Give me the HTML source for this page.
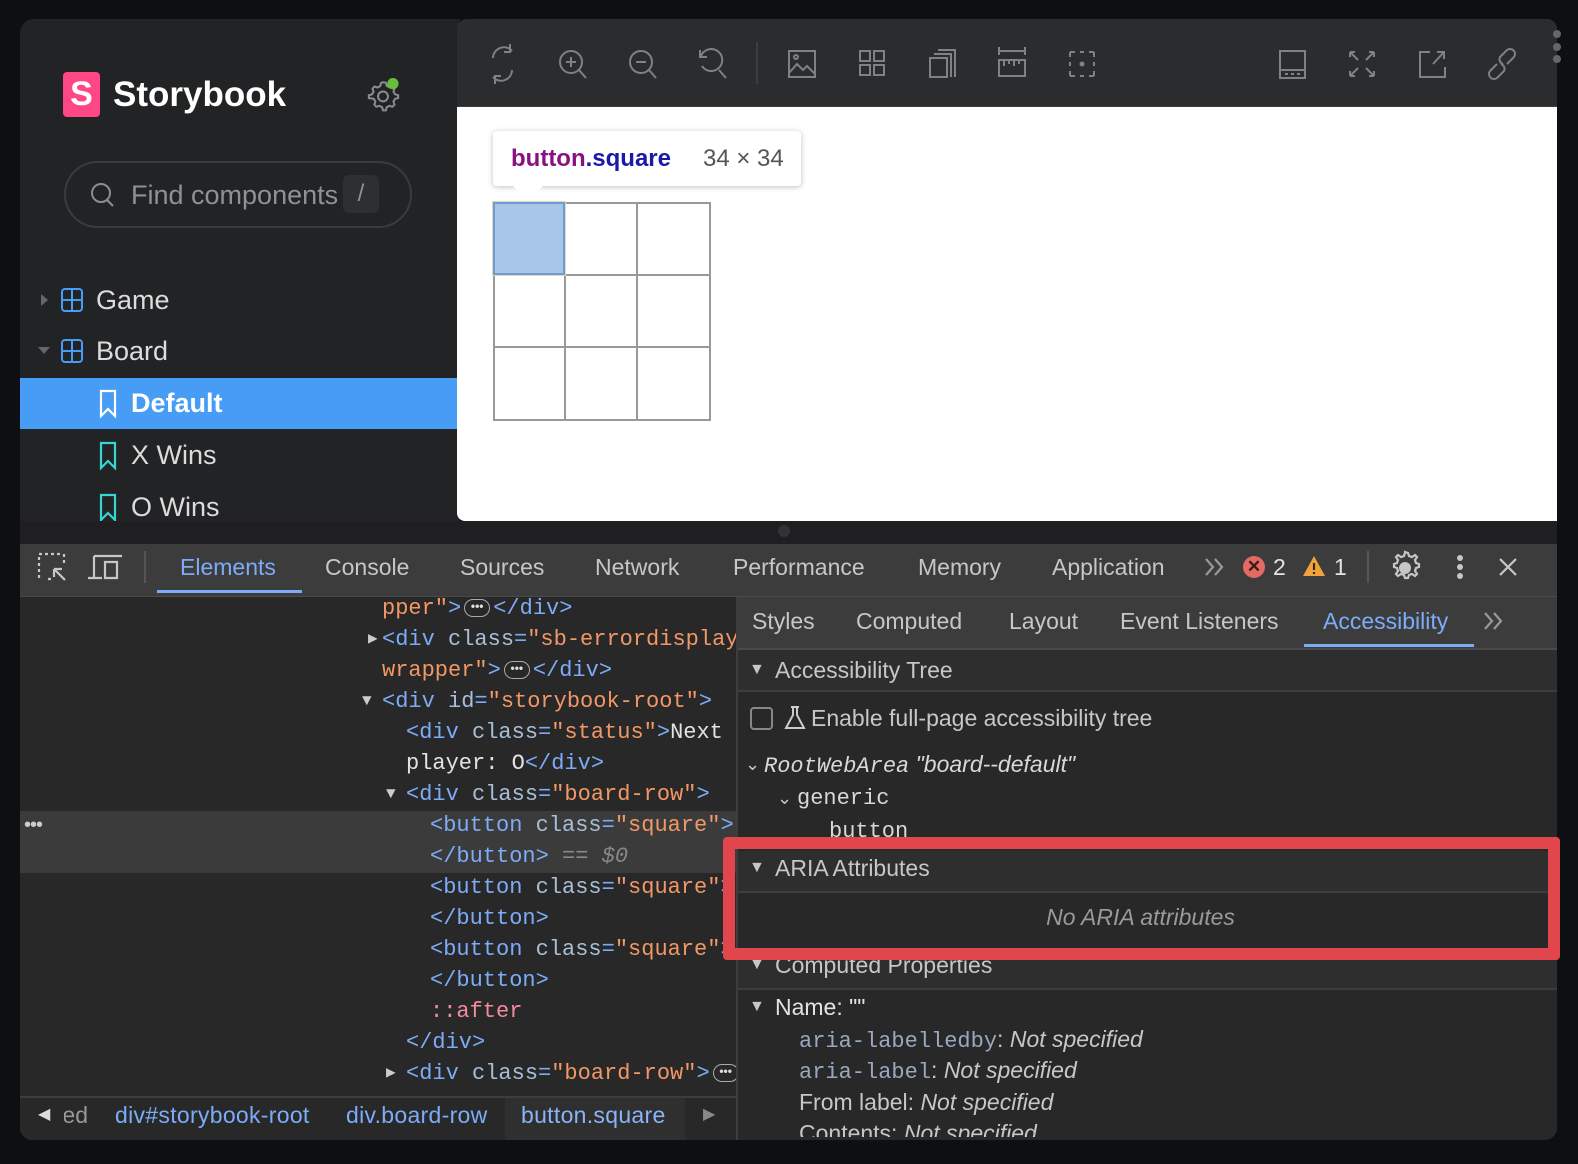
<!DOCTYPE html>
<html><head><meta charset="utf-8">
<style>
*{box-sizing:border-box;margin:0;padding:0}
body{width:1578px;height:1164px;background:#0e0f12;position:relative;overflow:hidden;font-family:"Liberation Sans",sans-serif}
.a{position:absolute;white-space:nowrap}
.m{font-family:"Liberation Mono",monospace;font-size:22px;line-height:31px}
.tg{color:#7cacf8}.at{color:#a8bfd8}.av{color:#f29766}.tx{color:#e3e3e3}
.badge{display:inline-block;width:26px;height:18px;border:1.5px solid #aaa;border-radius:9px;vertical-align:middle;font-size:12px;line-height:13px;text-align:center;color:#ddd;margin:0 3px;font-family:"Liberation Sans",sans-serif;font-weight:bold}
.dt{font-size:23px;color:#c7c7c7;line-height:30px}
svg{position:absolute;overflow:visible}
</style></head><body>
<!-- sidebar -->
<div class="a" style="left:20px;top:19px;width:440px;height:502px;background:#222325;border-top-left-radius:14px"></div>
<div class="a" style="left:63px;top:72px;width:37px;height:45px;background:#ff4785;border-radius:4px;color:#fff;font-weight:bold;font-size:34px;text-align:center;line-height:45px">S</div>
<div class="a" style="left:113px;top:72px;font-size:35px;font-weight:bold;color:#fff;line-height:45px">Storybook</div>
<svg style="left:366px;top:78px" width="34" height="34" viewBox="0 0 24 24"><path d="M12 3l2 .3.6 2.2 1.9 1.1 2.2-.7 1.4 1.5-.7 2.2 1.1 1.9 2.2.6v2l-2.2.6-1.1 1.9.7 2.2-1.4 1.5-2.2-.7-1.9 1.1-.6 2.2h-2l-.6-2.2-1.9-1.1-2.2.7-1.4-1.5.7-2.2-1.1-1.9L2 14.2v-2l2.2-.6 1.1-1.9-.7-2.2 1.4-1.5 2.2.7 1.9-1.1.6-2.2z" fill="none" stroke="#8b8d90" stroke-width="1.4"/><circle cx="12" cy="13" r="3.5" fill="none" stroke="#8b8d90" stroke-width="1.4"/><circle cx="19" cy="4" r="4" fill="#66bf3c"/></svg>
<div class="a" style="left:64px;top:161px;width:348px;height:67px;border:2px solid #3a3b3e;border-radius:34px"></div>
<svg style="left:90px;top:182px" width="26" height="26"><circle cx="11" cy="11" r="9" fill="none" stroke="#8b8d90" stroke-width="2"/><path d="M17 18l6 6" stroke="#8b8d90" stroke-width="2"/></svg>
<div class="a" style="left:131px;top:178px;width:212px;overflow:hidden;font-size:27px;color:#8f9194;line-height:34px">Find components</div>
<div class="a" style="left:343px;top:175px;width:36px;height:38px;background:#2e2f31;border-radius:6px;color:#8f9194;font-size:24px;text-align:center;line-height:38px">/</div>
<svg style="left:40px;top:293px" width="10" height="14"><path d="M1 1l7 6-7 6z" fill="#666"/></svg>
<svg style="left:61px;top:288px" width="22" height="24"><rect x="1" y="1" width="20" height="22" rx="3" fill="none" stroke="#479cf5" stroke-width="2"/><path d="M11 1v22M1 12h20" stroke="#479cf5" stroke-width="2"/></svg>
<div class="a" style="left:96px;top:283px;font-size:27px;color:#dcdcdc;line-height:34px">Game</div>
<svg style="left:37px;top:346px" width="14" height="10"><path d="M1 1h12l-6 7z" fill="#666"/></svg>
<svg style="left:61px;top:339px" width="22" height="24"><rect x="1" y="1" width="20" height="22" rx="3" fill="none" stroke="#479cf5" stroke-width="2"/><path d="M11 1v22M1 12h20" stroke="#479cf5" stroke-width="2"/></svg>
<div class="a" style="left:96px;top:334px;font-size:27px;color:#dcdcdc;line-height:34px">Board</div>
<div class="a" style="left:20px;top:378px;width:437px;height:51px;background:#479cf5"></div>
<svg style="left:99px;top:390px" width="18" height="28"><path d="M2 1h14v25l-7-7-7 7z" fill="none" stroke="#fff" stroke-width="2.2"/></svg>
<div class="a" style="left:131px;top:386px;font-size:27px;color:#fff;font-weight:bold;line-height:34px">Default</div>
<svg style="left:99px;top:442px" width="18" height="28"><path d="M2 1h14v25l-7-7-7 7z" fill="none" stroke="#37d5d3" stroke-width="2.2"/></svg>
<div class="a" style="left:131px;top:438px;font-size:27px;color:#dcdcdc;line-height:34px">X Wins</div>
<svg style="left:99px;top:494px" width="18" height="28"><path d="M2 1h14v25l-7-7-7 7z" fill="none" stroke="#37d5d3" stroke-width="2.2"/></svg>
<div class="a" style="left:131px;top:490px;font-size:27px;color:#dcdcdc;line-height:34px">O Wins</div>
<!-- toolbar -->
<div class="a" style="left:457px;top:19px;width:1100px;height:88px;background:#2b2c2e;border-top-left-radius:10px;border-top-right-radius:10px;border-bottom:1px solid #3a3b3d"></div>
<svg style="left:0;top:0" width="1578" height="110" fill="none" stroke="#7e8185" stroke-width="2">
<path d="M493 58a11 11 0 0 1 17-9l2 2M512 70a11 11 0 0 1-17 9l-2-2M510 44v8h-6M495 84v-8h6"/>
<circle cx="571" cy="62" r="11"/><path d="M579 70l7 8M566 62h10M571 57v10"/>
<circle cx="641" cy="62" r="11"/><path d="M649 70l7 8M636 62h10"/>
<path d="M701 56a11 11 0 1 1 1 10M700 50v7h7M719 70l7 8"/>
<path d="M757 42v42" stroke="#3c3d40"/>
<rect x="789" y="51" width="26" height="26"/><path d="M789 73l8-9 6 6 4-4 8 8"/><circle cx="796" cy="57" r="2"/>
<rect x="860" y="51" width="10" height="10"/><rect x="874" y="51" width="10" height="10"/><rect x="860" y="65" width="10" height="10"/><rect x="874" y="65" width="10" height="10"/>
<rect x="930" y="58" width="17" height="19"/><path d="M934 54h17v23M938 50h17v27"/>
<path d="M999 51h26M999 47v8M1025 47v8"/><rect x="999" y="60" width="26" height="16"/><path d="M1004 60v6M1009 60v4M1014 60v6M1019 60v4"/>
<path d="M1070 52h5M1089 52h5M1070 76h5M1089 76h5M1070 52v5M1070 71v5M1094 52v5M1094 71v5M1070 62v4M1094 62v4M1080 52h4M1080 76h4"/><circle cx="1082" cy="64" r="1.5" fill="#7e8185"/>
<rect x="1280" y="51" width="25" height="27"/><path d="M1280 70h25M1285 74h3M1291 74h3M1297 74h3"/>
<path d="M1350 52l8 8M1350 52h5M1350 52v5M1374 52l-8 8M1374 52h-5M1374 52v5M1350 76l8-8M1350 76h5M1350 76v-5M1374 76l-8-8M1374 76h-5M1374 76v-5"/>
<path d="M1430 52h-10v25h25v-10M1433 64l11-12M1437 52h7v7"/>
<path d="M1497 64l-7 7a5 5 0 0 0 7 7l7-7a5 5 0 0 0-3-7M1507 64l7-7a5 5 0 0 0-7-7l-7 7a5 5 0 0 0 3 7"/>
</svg>
<div class="a" style="left:1553px;top:30px;width:8px;height:8px;border-radius:4px;background:#666"></div>
<div class="a" style="left:1553px;top:43px;width:8px;height:8px;border-radius:4px;background:#666"></div>
<div class="a" style="left:1553px;top:55px;width:8px;height:8px;border-radius:4px;background:#666"></div>
<!-- preview -->
<div class="a" style="left:457px;top:107px;width:1100px;height:414px;background:#fff;border-bottom-left-radius:8px"></div>
<div class="a" style="left:493px;top:131px;width:308px;height:55px;background:#fff;border-radius:4px;box-shadow:0 1px 6px rgba(0,0,0,.25)"></div>
<div class="a" style="left:512px;top:185px;width:0;height:0;border-left:16px solid transparent;border-right:16px solid transparent;border-top:16px solid #fff"></div>
<div class="a" style="left:511px;top:143px;font-size:24px;font-weight:bold;line-height:32px"><span style="color:#881280">button</span><span style="color:#1a1aa6">.square</span></div>
<div class="a" style="left:703px;top:143px;font-size:24px;color:#555;line-height:32px">34 × 34</div>
<div class="a" style="left:493px;top:202px;width:218px;height:219px;border:2px solid #999"></div>
<div class="a" style="left:564px;top:202px;width:2px;height:219px;background:#999"></div>
<div class="a" style="left:636px;top:202px;width:2px;height:219px;background:#999"></div>
<div class="a" style="left:493px;top:274px;width:218px;height:2px;background:#999"></div>
<div class="a" style="left:493px;top:346px;width:218px;height:2px;background:#999"></div>
<div class="a" style="left:493px;top:202px;width:72px;height:73px;background:#a8c6e8;border:2px solid #6b9bd8;outline:1px solid #e8d9a8"></div>
<!-- divider -->
<div class="a" style="left:20px;top:521px;width:1537px;height:23px;background:#1f1f21"></div>
<div class="a" style="left:778px;top:525px;width:12px;height:12px;border-radius:6px;background:#333"></div>
<!-- devtools -->
<div class="a" style="left:20px;top:544px;width:1537px;height:53px;background:#3c3c3c;border-bottom:1px solid #4a4a4a"></div>
<div class="a" style="left:20px;top:597px;width:716px;height:543px;background:#282828;border-bottom-left-radius:12px"></div>
<div class="a" style="left:736px;top:597px;width:2px;height:543px;background:#3d3d3d"></div>
<div class="a" style="left:738px;top:597px;width:819px;height:543px;background:#282828;border-bottom-right-radius:12px"></div>
<svg style="left:0;top:0" width="1578" height="600" fill="none" stroke="#c7c7c7" stroke-width="2.2">
<path d="M39 554h3M45 554h3M51 554h3M57 554h3M39 557v3M39 563v3M39 569v3M39 575v3M64 554v3M64 560v3M48 579h3M54 569l11 11M54 569h8M54 569v8" />
<path d="M94 556v22M88 578h14M94 556h28M105 562v16h12v-16z"/>
<path d="M145 551v32" stroke="#555"/>
<path d="M1206 559l7 8-7 8M1215 559l7 8-7 8" stroke="#999"/>
<path d="M1368 551v32" stroke="#555"/>
<path d="M1405 552l3 1 1 3 3 1 3-2 2 2-2 3 1 3 3 1v3l-3 1-1 3 2 3-2 2-3-2-3 1-1 3h-3l-1-3-3-1-3 2-2-2 2-3-1-3-3-1v-3l3-1 1-3-2-3 2-2 3 2 3-1 1-3z"/>
<path d="M1500 559l16 16M1516 559l-16 16"/>
</svg>
<div class="a" style="left:1399px;top:562px;width:12px;height:12px;border-radius:6px;background:#c7c7c7"></div>
<div class="a" style="left:1457px;top:555px;width:6px;height:6px;border-radius:3px;background:#c7c7c7"></div>
<div class="a" style="left:1457px;top:564px;width:6px;height:6px;border-radius:3px;background:#c7c7c7"></div>
<div class="a" style="left:1457px;top:573px;width:6px;height:6px;border-radius:3px;background:#c7c7c7"></div>
<div class="a" style="left:1243px;top:556px;width:22px;height:22px;border-radius:11px;background:#e46962;color:#3a1a1a;font-size:17px;text-align:center;line-height:22px;font-weight:bold">✕</div>
<div class="a dt" style="left:1273px;top:552px;color:#e3e3e3">2</div>
<svg style="left:1302px;top:555px" width="24" height="22"><path d="M12 1l11 20H1z" fill="#f0a23b"/><path d="M12 8v7M12 17v2" stroke="#3a2a10" stroke-width="2.2"/></svg>
<div class="a dt" style="left:1334px;top:552px;color:#e3e3e3">1</div>
<div class="a dt" style="left:180px;top:552px;color:#7cacf8">Elements</div>
<div class="a" style="left:157px;top:590px;width:145px;height:3px;background:#7cacf8"></div>
<div class="a dt" style="left:325px;top:552px">Console</div>
<div class="a dt" style="left:460px;top:552px">Sources</div>
<div class="a dt" style="left:595px;top:552px">Network</div>
<div class="a dt" style="left:733px;top:552px">Performance</div>
<div class="a dt" style="left:918px;top:552px">Memory</div>
<div class="a dt" style="left:1052px;top:552px">Application</div>
<!-- elements code -->
<div class="a" style="left:20px;top:811px;width:716px;height:62px;background:#3b3b3b"></div>
<div class="a" style="left:24px;top:814px;color:#ccc;font-size:20px;letter-spacing:-1px">•••</div>
<div class="a" style="left:20px;top:597px;width:716px;height:500px;overflow:hidden">
<div class="a m" style="left:362px;top:-4px"><span class="av">pper"</span><span class="tg">&gt;</span><span class="badge">•••</span><span class="tg">&lt;/div&gt;</span></div>
<div class="a m" style="left:348px;top:27px;color:#ccc;font-size:16px">▶</div>
<div class="a m" style="left:362px;top:27px"><span class="tg">&lt;div </span><span class="at">class</span><span class="tg">=</span><span class="av">"sb-errordisplay</span></div>
<div class="a m" style="left:362px;top:58px"><span class="av">wrapper"</span><span class="tg">&gt;</span><span class="badge">•••</span><span class="tg">&lt;/div&gt;</span></div>
<div class="a m" style="left:342px;top:89px;color:#ccc;font-size:16px">▼</div>
<div class="a m" style="left:362px;top:89px"><span class="tg">&lt;div </span><span class="at">id</span><span class="tg">=</span><span class="av">"storybook-root"</span><span class="tg">&gt;</span></div>
<div class="a m" style="left:386px;top:120px"><span class="tg">&lt;div </span><span class="at">class</span><span class="tg">=</span><span class="av">"status"</span><span class="tg">&gt;</span><span class="tx">Next</span></div>
<div class="a m" style="left:386px;top:151px"><span class="tx">player: O</span><span class="tg">&lt;/div&gt;</span></div>
<div class="a m" style="left:366px;top:182px;color:#ccc;font-size:16px">▼</div>
<div class="a m" style="left:386px;top:182px"><span class="tg">&lt;div </span><span class="at">class</span><span class="tg">=</span><span class="av">"board-row"</span><span class="tg">&gt;</span></div>
<div class="a m" style="left:410px;top:213px"><span class="tg">&lt;button </span><span class="at">class</span><span class="tg">=</span><span class="av">"square"</span><span class="tg">&gt;</span></div>
<div class="a m" style="left:410px;top:244px"><span class="tg">&lt;/button&gt;</span><span style="color:#888"> == <i>$0</i></span></div>
<div class="a m" style="left:410px;top:275px"><span class="tg">&lt;button </span><span class="at">class</span><span class="tg">=</span><span class="av">"square"</span><span class="tg">&gt;</span></div>
<div class="a m" style="left:410px;top:306px"><span class="tg">&lt;/button&gt;</span></div>
<div class="a m" style="left:410px;top:337px"><span class="tg">&lt;button </span><span class="at">class</span><span class="tg">=</span><span class="av">"square"</span><span class="tg">&gt;</span></div>
<div class="a m" style="left:410px;top:368px"><span class="tg">&lt;/button&gt;</span></div>
<div class="a m" style="left:410px;top:399px;color:#f28b9d">::after</div>
<div class="a m" style="left:386px;top:430px"><span class="tg">&lt;/div&gt;</span></div>
<div class="a m" style="left:366px;top:461px;color:#ccc;font-size:16px">▶</div>
<div class="a m" style="left:386px;top:461px"><span class="tg">&lt;div </span><span class="at">class</span><span class="tg">=</span><span class="av">"board-row"</span><span class="tg">&gt;</span><span class="badge">•••</span></div>
</div>
<!-- breadcrumb -->
<div class="a" style="left:20px;top:1096px;width:716px;height:44px;background:#282828;border-top:2px solid #3d3d3d;border-bottom-left-radius:12px"></div>
<div class="a" style="left:505px;top:1098px;width:180px;height:42px;background:#2f2f2f"></div>
<div class="a" style="left:38px;top:1104px;color:#ddd;font-size:16px">◀</div>
<div class="a" style="left:64px;top:1100px;width:24px;overflow:hidden;font-size:23px;line-height:30px;color:#999;direction:rtl">ed</div>
<div class="a" style="left:115px;top:1100px;font-size:23px;line-height:30px;color:#7cacf8;letter-spacing:0.3px">div#storybook-root</div>
<div class="a" style="left:346px;top:1100px;font-size:23px;line-height:30px;color:#7cacf8;letter-spacing:0.3px">div.board-row</div>
<div class="a" style="left:521px;top:1100px;font-size:23px;line-height:30px;color:#8ab4f8;letter-spacing:0.3px">button.square</div>
<div class="a" style="left:703px;top:1104px;color:#888;font-size:16px">▶</div>
<!-- right panel -->
<div class="a" style="left:738px;top:597px;width:819px;height:53px;background:#3c3c3c;border-bottom:2px solid #4a4a4a"></div>
<div class="a dt" style="left:752px;top:606px">Styles</div>
<div class="a dt" style="left:856px;top:606px">Computed</div>
<div class="a dt" style="left:1009px;top:606px">Layout</div>
<div class="a dt" style="left:1120px;top:606px">Event Listeners</div>
<div class="a dt" style="left:1323px;top:606px;color:#7cacf8">Accessibility</div>
<div class="a" style="left:1304px;top:644px;width:170px;height:3px;background:#7cacf8"></div>
<svg style="left:1484px;top:612px" width="24" height="20" fill="none" stroke="#999" stroke-width="2.2"><path d="M1 1l7 8-7 8M10 1l7 8-7 8"/></svg>
<div class="a" style="left:738px;top:650px;width:819px;height:42px;background:#2e2e2e;border-bottom:2px solid #3d3d3d"></div>
<div class="a dt" style="left:749px;top:655px;font-size:16px">▼</div>
<div class="a dt" style="left:775px;top:655px">Accessibility Tree</div>
<div class="a" style="left:750px;top:707px;width:23px;height:23px;border:2px solid #888;border-radius:4px"></div>
<svg style="left:783px;top:706px" width="24" height="24" fill="none" stroke="#ccc" stroke-width="2"><path d="M8 1h8M10 1v8L3 22h18L14 9V1"/></svg>
<div class="a dt" style="left:811px;top:703px">Enable full-page accessibility tree</div>
<div class="a dt" style="left:745px;top:749px;font-size:18px">⌄</div>
<div class="a" style="left:764px;top:749px;font-size:23px;line-height:30px;color:#d8d8d8;font-style:italic"><span style="font-family:'Liberation Mono',monospace;font-size:22px">RootWebArea</span> "board--default"</div>
<div class="a dt" style="left:777px;top:783px;font-size:18px">⌄</div>
<div class="a m" style="left:797px;top:783px;color:#d8d8d8">generic</div>
<div class="a m" style="left:829px;top:816px;color:#d8d8d8;height:24px;overflow:hidden">button</div>
<div class="a" style="left:738px;top:851px;width:819px;height:42px;background:#2e2e2e;border-bottom:2px solid #3d3d3d"></div>
<div class="a dt" style="left:749px;top:853px;font-size:16px">▼</div>
<div class="a dt" style="left:775px;top:853px">ARIA Attributes</div>
<div class="a dt" style="left:738px;top:902px;width:805px;text-align:center;font-style:italic;color:#9a9a9a">No ARIA attributes</div>
<div class="a" style="left:738px;top:950px;width:819px;height:40px;background:#2e2e2e;border-bottom:2px solid #3d3d3d"></div>
<div class="a dt" style="left:749px;top:950px;font-size:16px">▼</div>
<div class="a dt" style="left:775px;top:950px">Computed Properties</div>
<div class="a dt" style="left:749px;top:992px;font-size:16px">▼</div>
<div class="a dt" style="left:775px;top:992px;color:#e3e3e3">Name: ""</div>
<div class="a" style="left:738px;top:1020px;width:819px;height:117px;overflow:hidden">
<div class="a dt" style="left:61px;top:4px"><span class="m" style="color:#9aa7c0">aria-labelledby</span>: <i>Not specified</i></div>
<div class="a dt" style="left:61px;top:35px"><span class="m" style="color:#9aa7c0">aria-label</span>: <i>Not specified</i></div>
<div class="a dt" style="left:61px;top:67px">From label: <i>Not specified</i></div>
<div class="a dt" style="left:61px;top:98px">Contents: <i>Not specified</i></div>
</div>
<!-- red highlight -->
<div class="a" style="left:723px;top:837px;width:837px;height:123px;border:12px solid #e0464c;border-radius:4px"></div>
</body></html>
